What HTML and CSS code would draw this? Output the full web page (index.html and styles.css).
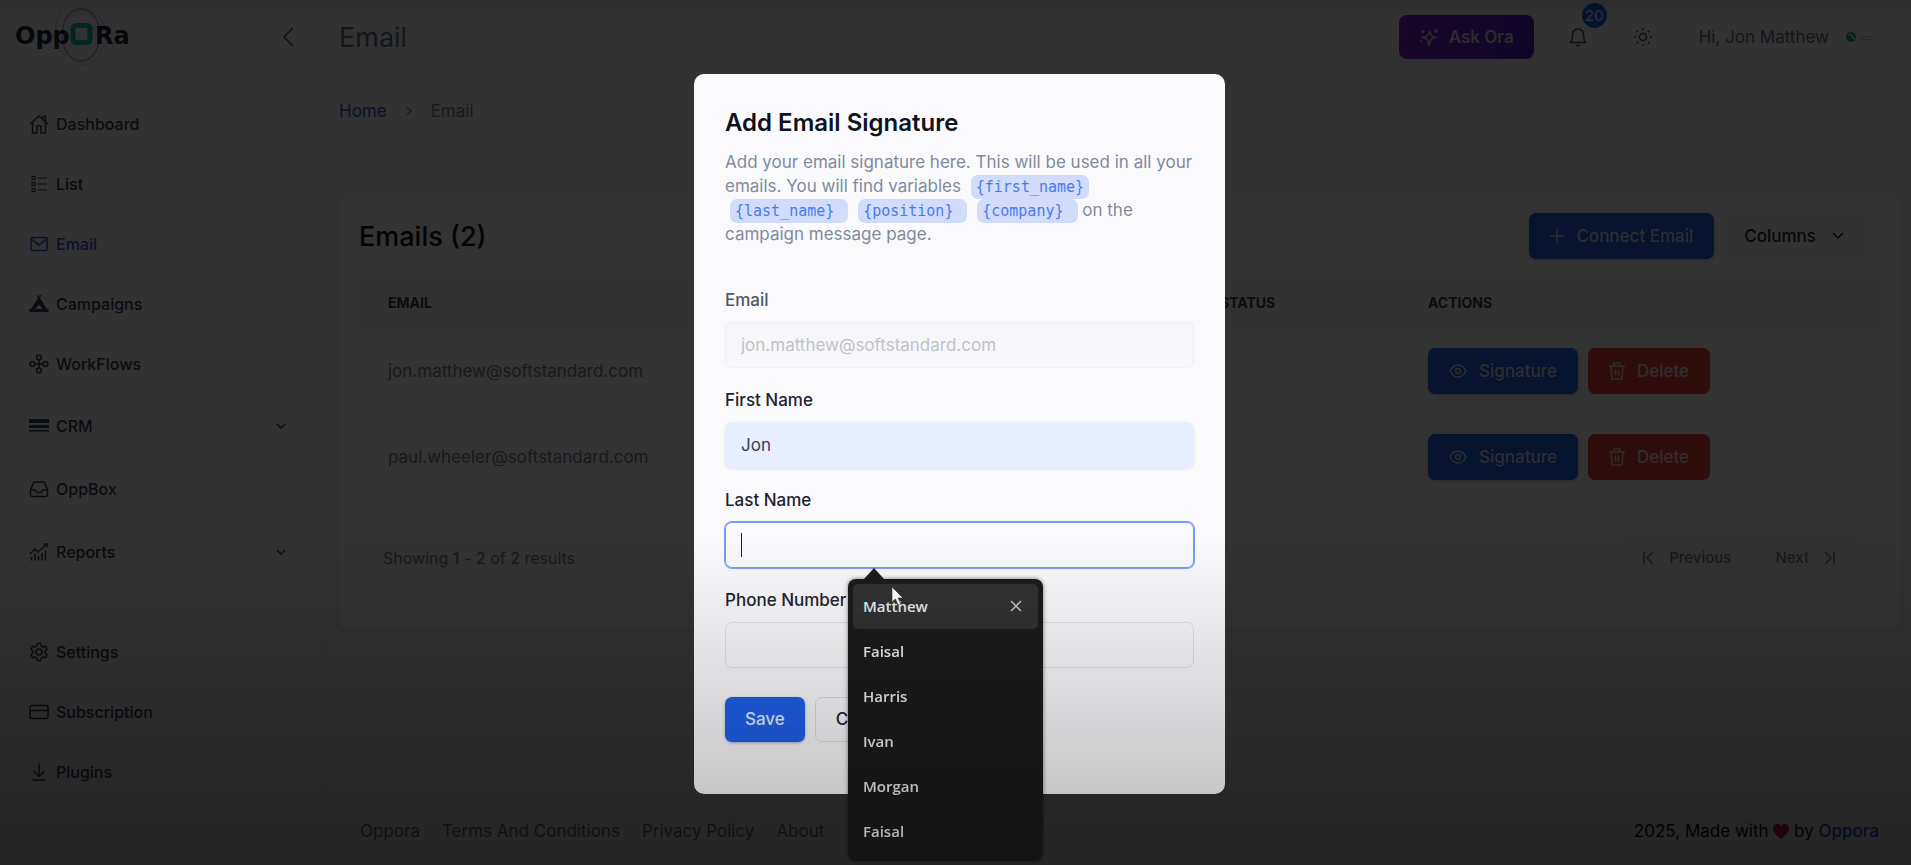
FILE: index.html
```html
<!DOCTYPE html>
<html lang="en">
<head>
<meta charset="utf-8">
<title>Email - Oppora</title>
<link rel="stylesheet" href="styles.css">
</head>
<body>
<div class="app">
  <aside class="sidebar">
    <div class="brand">
      <svg class="logo" width="120" height="58" viewBox="0 0 120 58" role="img" aria-label="Oppora">
        <ellipse cx="66" cy="27" rx="19" ry="26" fill="none" stroke="#a855c8" stroke-width="2" opacity=".5"/>
        <path d="M46 2q-12 26 4 46M84 8q14 22-2 42-8 8-16 7" fill="none" stroke="#a855c8" stroke-width="1.500" opacity=".25"/>
        <text class="logo-text" x="0" y="36">Opp</text>
        <rect x="58" y="17.500" width="17" height="17" rx="3" fill="none" stroke="#12b5a8" stroke-width="5"/>
        <text class="logo-text" x="80" y="36">Ra</text>
      </svg>
      <button class="icon-btn" aria-label="Collapse menu">
        <svg width="12" height="20" viewBox="0 0 12 20" class="ic"><path d="M11 1 2 10l9 9"/></svg>
      </button>
    </div>
    <nav class="nav">
      <a class="nav-item" href="#"><svg class="ic" width="20" height="20" viewBox="0 0 20 20"><path d="M1 10 10 2l9 8M3.500 8.500V19H8v-5.500a2 2 0 0 1 4 0V19h4.500V8.500M14 5V2.500h2.500V7"/></svg>Dashboard</a>
      <a class="nav-item" href="#"><svg class="ic thin" width="20" height="20" viewBox="0 0 20 20"><path d="M8.500 4H18M8.500 10H18M8.500 16H18"/><rect x="3" y="2.500" width="3" height="3"/><rect x="3" y="8.500" width="3" height="3"/><rect x="3" y="14.500" width="3" height="3"/></svg>List</a>
      <a class="nav-item active" href="#"><svg class="ic" width="20" height="20" viewBox="0 0 20 20"><rect x="2" y="3.500" width="16" height="13" rx="1"/><path d="m3 5.500 7 5.500 7-5.500"/></svg>Email</a>
      <a class="nav-item" href="#"><svg width="20" height="20" viewBox="0 0 20 20"><path fill="currentColor" fill-rule="evenodd" d="M7.500 1.500 8.800 1l1.200 1.800L11.200 1l1.300.5-1.500 2.500L18 15h1.500v3H.5v-3H2L9 4zM10 10.500 6.500 15h7z"/></svg>Campaigns</a>
      <a class="nav-item" href="#"><svg class="ic" width="20" height="20" viewBox="0 0 20 20"><circle cx="3.500" cy="10" r="2.400"/><circle cx="16.500" cy="10" r="2.400"/><circle cx="10" cy="3.500" r="2.400"/><circle cx="10" cy="16.500" r="2.400"/><path d="M6 10h2c2 0 2-1 2-4M14 10h-2c-2 0-2 1-2 4"/></svg>WorkFlows</a>
      <a class="nav-item tall" href="#"><svg width="20" height="20" viewBox="0 0 20 20" fill="currentColor"><path d="M0 3h20v4H0zM0 9h20v3H0zM0 14h20v1.500H0z"/></svg>CRM<svg class="ic caret" width="10" height="6" viewBox="0 0 10 6"><path d="m1 1 4 4 4-4"/></svg></a>
      <a class="nav-item tall" href="#"><svg class="ic" width="20" height="20" viewBox="0 0 20 20"><path d="M1.500 11 4 4.500Q4.500 3 6 3h8q1.500 0 2 1.500L18.500 11v4.500a2 2 0 0 1-2 2h-13a2 2 0 0 1-2-2zH6l2 2.500h4l2-2.500h4.500"/></svg>OppBox</a>
      <a class="nav-item tall" href="#"><svg class="ic" width="20" height="20" viewBox="0 0 20 20"><path d="m1 12 5-5 3 3 9-8M14.500 2H18v3.500M2.500 15v3.500M6 12v6.500M9.500 14v4.500M13 11v7.500M16.500 8v10.500"/></svg>Reports<svg class="ic caret" width="10" height="6" viewBox="0 0 10 6"><path d="m1 1 4 4 4-4"/></svg></a>
    </nav>
    <nav class="nav nav-bottom">
      <a class="nav-item" href="#"><svg class="ic" width="20" height="20" viewBox="0 0 20 20"><circle cx="10" cy="10" r="3"/><path d="M8.300 1.500h3.400l.6 2.600 1.500.9 2.500-.8L18 7.100l-1.900 1.900v2L18 12.900l-1.700 2.900-2.500-.8-1.500.9-.6 2.600H8.300l-.6-2.600-1.500-.9-2.500.8L2 12.900 3.900 11V9L2 7.100l1.700-2.900 2.500.8 1.500-.9z"/></svg>Settings</a>
      <a class="nav-item" href="#"><svg class="ic" width="20" height="20" viewBox="0 0 20 20"><rect x="1" y="3.500" width="18" height="13" rx="2"/><path d="M1 8.500h18"/></svg>Subscription</a>
      <a class="nav-item" href="#"><svg class="ic" width="20" height="20" viewBox="0 0 20 20"><path d="M10 1.500V14M4.500 9l5.500 5.500L15.500 9M3.500 18h13"/></svg>Plugins</a>
    </nav>
  </aside>

  <div class="page">
    <header class="topbar">
      <h1 class="page-title">Email</h1>
      <div class="tools">
        <button class="ask">
          <svg class="ic" width="20" height="20" viewBox="0 0 20 20"><path d="M11 4.500 12.300 9l4.200 1.500-4.200 1.500L10 18l-1.700-6L3.500 10.500 8.300 9z"/><path d="M17 2v4M15 4h4M4 3v3M2.500 4.500h3M2 13v2"/></svg>
          Ask Ora
        </button>
        <button class="icon-btn bell" aria-label="Notifications">
          <svg class="ic" width="18" height="20" viewBox="0 0 18 20"><path d="M1.500 15.500Q3.500 13 3.500 7.500a5.500 5.500 0 0 1 11 0q0 5.500 2 8zM7 18.500h4"/></svg>
          <span class="badge">20</span>
        </button>
        <button class="icon-btn" aria-label="Theme">
          <svg class="ic" width="20" height="20" viewBox="0 0 20 20"><circle cx="10" cy="10" r="3.500"/><path d="M10 1v2M10 17v2M1 10h2M17 10h2M3.600 3.600 5 5M15 15l1.400 1.400M3.600 16.400 5 15M15 5l1.400-1.400"/></svg>
        </button>
        <div class="user">
          <span>Hi, Jon Matthew</span>
          <svg width="28" height="12" viewBox="0 0 28 12" aria-hidden="true"><circle cx="5" cy="6" r="5" fill="#13a38f"/><path d="M2 4q3-2 4 1t3 3" stroke="#e8f6f4" stroke-width="1.500" fill="none"/><path d="M12 6h15M15 8.500h9" stroke="#9fcfc8" stroke-width="1"/></svg>
        </div>
      </div>
    </header>

    <main class="content">
      <nav class="crumbs" aria-label="Breadcrumb">
        <a href="#">Home</a>
        <svg class="ic" width="6" height="10" viewBox="0 0 6 10"><path d="m1 1 4 4-4 4"/></svg>
        <span>Email</span>
      </nav>

      <section class="card">
        <div class="card-head">
          <h2 class="card-title">Emails (2)</h2>
          <div class="actions">
            <button class="btn primary"><svg class="ic" width="14" height="14" viewBox="0 0 14 14"><path d="M7 0v14M0 7h14"/></svg>Connect Email</button>
            <button class="btn plain">Columns<svg class="ic" width="12" height="8" viewBox="0 0 12 8"><path d="m1 1 5 5 5-5"/></svg></button>
          </div>
        </div>
        <table class="table">
          <colgroup><col class="c-email"><col class="c-status"><col class="c-actions"></colgroup>
          <thead><tr><th>Email</th><th>Status</th><th>Actions</th></tr></thead>
          <tbody>
            <tr>
              <td>jon.matthew@softstandard.com</td><td></td>
              <td><div class="actions tight">
                <button class="btn primary"><svg class="ic" width="18" height="14" viewBox="0 0 18 14"><path d="M1 7Q4 1 9 1t8 6q-3 6-8 6T1 7z"/><circle cx="9" cy="7" r="2.500"/></svg>Signature</button>
                <button class="btn danger"><svg class="ic" width="16" height="18" viewBox="0 0 16 18"><path d="M0 4h16M2 4l1 13h10l1-13M5 4V1h6v3M6.500 7.500v6M9.500 7.500v6"/></svg>Delete</button>
              </div></td>
            </tr>
            <tr>
              <td>paul.wheeler@softstandard.com</td><td></td>
              <td><div class="actions tight">
                <button class="btn primary"><svg class="ic" width="18" height="14" viewBox="0 0 18 14"><path d="M1 7Q4 1 9 1t8 6q-3 6-8 6T1 7z"/><circle cx="9" cy="7" r="2.500"/></svg>Signature</button>
                <button class="btn danger"><svg class="ic" width="16" height="18" viewBox="0 0 16 18"><path d="M0 4h16M2 4l1 13h10l1-13M5 4V1h6v3M6.500 7.500v6M9.500 7.500v6"/></svg>Delete</button>
              </div></td>
            </tr>
          </tbody>
        </table>
        <div class="pager">
          <p>Showing <b>1</b> - <b>2</b> of <b>2</b> results</p>
          <div class="pager-btns">
            <button class="btn plain muted"><svg class="ic" width="12" height="14" viewBox="0 0 12 14"><path d="M1 1v12M10 1 4 7l6 6"/></svg>Previous</button>
            <button class="btn plain muted">Next<svg class="ic" width="12" height="14" viewBox="0 0 12 14"><path d="M11 1v12M2 1l6 6-6 6"/></svg></button>
          </div>
        </div>
      </section>
    </main>

    <footer class="footer">
      <nav class="foot-links"><a href="#">Oppora</a><a href="#">Terms And Conditions</a><a href="#">Privacy Policy</a><a href="#">About</a></nav>
      <p class="made">2025, Made with <svg width="16" height="15" viewBox="0 0 16 15" aria-label="love"><path fill="#e11d48" d="M8 15C2 10 0 7.500 0 4.500A4.300 4.300 0 0 1 8 2a4.300 4.300 0 0 1 8 2.500c0 3-2 5.500-8 10.500z"/></svg> by <a href="#">Oppora</a></p>
    </footer>
  </div>
</div>

<div class="backdrop">
  <form class="modal" role="dialog" aria-labelledby="modal-title">
    <h2 class="modal-title" id="modal-title">Add Email Signature</h2>
    <p class="modal-text">Add your email signature here. This will be used in all your emails. You will find variables <code>{first_name}</code> <code class="roomy">{last_name}</code> <code class="roomy">{position}</code> <code class="roomy">{company}</code> on the campaign message page.</p>
    <div class="field off">
      <label for="email">Email</label>
      <input id="email" type="email" value="jon.matthew@softstandard.com" disabled>
    </div>
    <div class="field">
      <label for="first">First Name</label>
      <input id="first" class="filled" type="text" value="Jon">
    </div>
    <div class="field">
      <label for="last">Last Name</label>
      <div class="combo">
        <input id="last" class="focused" type="text">
        <span class="caret-bar"></span>
        <ul class="suggest">
          <li class="hover">Matthew<button type="button" class="remove" aria-label="Remove"><svg class="ic" width="12" height="12" viewBox="0 0 12 12"><path d="m1 1 10 10M11 1 1 11"/></svg></button></li>
          <li>Faisal</li>
          <li>Harris</li>
          <li>Ivan</li>
          <li>Morgan</li>
          <li>Faisal</li>
        </ul>
        <svg class="pointer" width="14" height="20" viewBox="0 0 14 20" aria-hidden="true"><path d="M1 1v15l3.500-3L7 19l2.500-1.200L7.200 12H12z" fill="#fff" stroke="#333" stroke-width=".6"/></svg>
      </div>
    </div>
    <div class="field">
      <label for="phone">Phone Number</label>
      <input id="phone" type="tel">
    </div>
    <div class="modal-actions">
      <button type="button" class="btn save">Save</button>
      <button type="button" class="btn cancel">Cancel</button>
    </div>
  </form>
</div>
<div class="shade"></div>
</body>
</html>
```
FILE: styles.css
```css
* { box-sizing: border-box; }

body {
  margin: 0;
  font-family: Inter, "Open Sans", sans-serif;
  font-size: 17px;
  color: #334155;
  background: #fafafa;
  overflow: hidden;
}

h1, h2, p, ul { margin: 0; padding: 0; }
a { color: inherit; text-decoration: none; }
button, input { font: inherit; color: inherit; }
button { border: 0; background: none; padding: 0; cursor: pointer; }
.ic { fill: none; stroke: currentColor; stroke-width: 1.5; flex: none; }
.thin { stroke-width: 1; }

.app { display: flex; min-height: 100vh; }

/* Sidebar */
.sidebar {
  flex: none;
  width: 325px;
  display: flex;
  flex-direction: column;
  border-right: 1px solid #f1f1f4;
}
.brand {
  display: flex;
  align-items: center;
  justify-content: space-between;
  height: 78px;
  padding: 0 30px 5px 15px;
}
.logo-text { font: bold 24px "DejaVu Sans", sans-serif; fill: #1e293b; }
.icon-btn { position: relative; display: flex; color: #475569; }
.nav { display: flex; flex-direction: column; gap: 12px; padding: 22px 16px 0 11px; }
.nav-item {
  display: flex;
  align-items: center;
  gap: 7px;
  height: 48px;
  padding: 0 22px 0 18px;
  border-radius: 8px;
  font-size: 16px;
  font-weight: 500;
  color: #334155;
}
.tall { height: 51px; }
.active { background: #f7f7f8; color: #3b4fe0; }
.caret { margin-left: auto; }
.nav-bottom { padding-top: 51px; }

/* Page */
.page { flex: 1; min-width: 0; display: flex; flex-direction: column; }
.topbar {
  display: flex;
  align-items: center;
  justify-content: space-between;
  height: 78px;
  padding: 0 37px 3px 14px;
  border-bottom: 1px solid #f1f1f4;
}
.page-title { font-size: 27px; font-weight: 400; color: #64748b; }
.tools { display: flex; align-items: center; gap: 46px; color: #475569; }
.ask {
  display: flex;
  align-items: center;
  gap: 10px;
  height: 44px;
  margin-right: -11px;
  padding: 0 20px;
  border-radius: 8px;
  font-weight: 600;
  color: #d4d4dc;
  background: linear-gradient(100deg, #7e22ce, #4c1dce);
  box-shadow: 0 14px 20px #eeecf2;
}
.badge {
  position: absolute;
  left: 13px;
  bottom: 19px;
  width: 25px;
  height: 25px;
  border-radius: 50%;
  background: #2563eb;
  color: #dbe4f8;
  font-size: 15px;
  font-weight: 500;
  line-height: 25px;
}
.user { display: flex; align-items: center; gap: 17px; color: #64748b; }

.content { flex: 1; padding: 23px 11px 0 14px; }
.crumbs { display: flex; align-items: center; gap: 19px; line-height: 20px; color: #7b8494; }
.crumbs a { color: #2f54e0; }

.card {
  margin-top: 74px;
  border-radius: 8px;
  background: #fdfdfd;
  box-shadow: 0 2px 6px #d8d8dc;
  padding: 18px 20px 48px;
}
.card-head { display: flex; align-items: center; justify-content: space-between; padding-right: 13px; }
.card-title { font-size: 27px; font-weight: 500; color: #0f172a; }
.actions { display: flex; gap: 12px; }
.tight { gap: 10px; }
.btn {
  display: flex;
  align-items: center;
  justify-content: center;
  gap: 12px;
  height: 46px;
  padding: 0 21px;
  border-radius: 7px;
  font-weight: 500;
}
.primary { background: #2563eb; color: #d8dfe8; box-shadow: 0 1px 3px #b8c4e0; }
.danger { background: #ef4444; color: #eadcdc; }
.plain { background: #fbfbfb; color: #1e293b; border: 1px solid #f4f4f6; padding: 0 22px 0 17px; gap: 16px; }
.muted { color: #7b8494; font-size: 15px; padding: 0 18px; gap: 14px; }

.table { width: 100%; margin-top: 18px; border-collapse: collapse; table-layout: fixed; }
.c-status { width: 208px; }
.c-actions { width: 481px; }
.table th {
  height: 51px;
  padding: 0 29px;
  text-align: left;
  font-size: 14px;
  text-transform: uppercase;
  color: #334155;
  background: #f8f8f9;
}
.table td { height: 86px; padding: 0 29px; color: #7b8494; border-bottom: 1px solid #f4f4f6; }

.pager { display: flex; align-items: center; justify-content: space-between; padding: 34px 26px 0 24px; color: #7b8494; font-size: 16px; }
.pager-btns { display: flex; gap: 6px; }
.pager b { font-weight: 500; }

.footer {
  display: flex;
  align-items: center;
  justify-content: space-between;
  height: 72px;
  margin: 0 11px 0 14px;
  padding: 2px 21px 0;
  border-top: 1px solid #eeeef0;
}
.foot-links { display: flex; gap: 22px; color: #64748b; }
.made { color: #0f172a; }
.made a { color: #2f54e0; font-weight: 500; }
.made svg { vertical-align: -2px; }

/* Modal */
.backdrop {
  position: fixed;
  inset: 0;
  display: grid;
  place-items: center;
  padding: 2px 0 0 8px;
  background: rgba(0, 0, 0, .8);
}
.modal {
  width: 531px;
  padding: 32px 31px 52px;
  border-radius: 10px;
  background: #fafafc;
}
.modal-title { font-size: 24px; line-height: 34px; font-weight: 600; color: #0f1220; }
.modal-text { margin: 10px 0 43px; line-height: 24px; color: #7f8a9f; }
.modal-text code {
  margin-left: 5px;
  padding: 3px 5px;
  border-radius: 7px;
  font: 15px/18px "DejaVu Sans Mono", monospace;
  color: #4b7bea;
  background: #d0dcfa;
}
.modal-text .roomy { padding-right: 14px; }
.field { display: flex; flex-direction: column; gap: 10px; margin-bottom: 21px; }
.field label { line-height: 23px; font-weight: 500; color: #1f2430; }
.off label { color: #4f5664; }
.field input {
  width: 100%;
  height: 46px;
  padding: 0 15px;
  border: 1px solid #e0e2e8;
  border-radius: 7px;
  outline: 0;
  background: transparent;
  color: #374151;
}
.field input:disabled { color: #bfc2c9; background: #f7f7f9; border-color: #f0f0f3; }
.field .filled { background: #e7eefd; border-color: #e7eefd; box-shadow: 0 1px 3px #e0e2ee; }
.field .focused { border-color: #6f9bf5; box-shadow: 0 0 0 1px #7ba2f2; }
.combo { position: relative; }
.caret-bar { position: absolute; left: 16px; top: 11px; width: 1px; height: 24px; background: #222; }

.suggest {
  position: absolute;
  left: 123px;
  top: 57px;
  width: 195px;
  padding: 5px 5px 7px;
  border-radius: 8px;
  list-style: none;
  background: #1c1c1d;
  box-shadow: 0 0 4px rgba(0, 0, 0, .5);
  color: #ebebeb;
  font: 600 15px/45px "Open Sans", sans-serif;
}
.suggest::before {
  content: "";
  position: absolute;
  left: 16px;
  top: -11px;
  border: 10px solid transparent;
  border-top: 0;
  border-bottom: 11px solid #1c1c1d;
}
.suggest li { display: flex; align-items: center; justify-content: space-between; padding: 0 16px 0 10px; border-radius: 5px; }
.suggest .hover { background: #323233; }
.remove { display: flex; color: #c8c8c8; }
.pointer { position: absolute; left: 166px; top: 64px; }

.modal-actions { display: flex; gap: 10px; padding-top: 8px; }
.modal-actions .btn { padding: 0 20px; height: 45px; }
.save { background: #2060ea; color: #e4ebfa; box-shadow: 0 1px 3px #9aa9cc; }
.cancel { border: 1px solid #dcdde2; color: #1f2430; }

/* Darkening along the lower edge of the screen */
.shade {
  position: fixed;
  inset: 0;
  pointer-events: none;
  background: linear-gradient(rgba(0, 0, 0, .1), transparent 2%, transparent 62%, rgba(0, 0, 0, .26));
}
```
